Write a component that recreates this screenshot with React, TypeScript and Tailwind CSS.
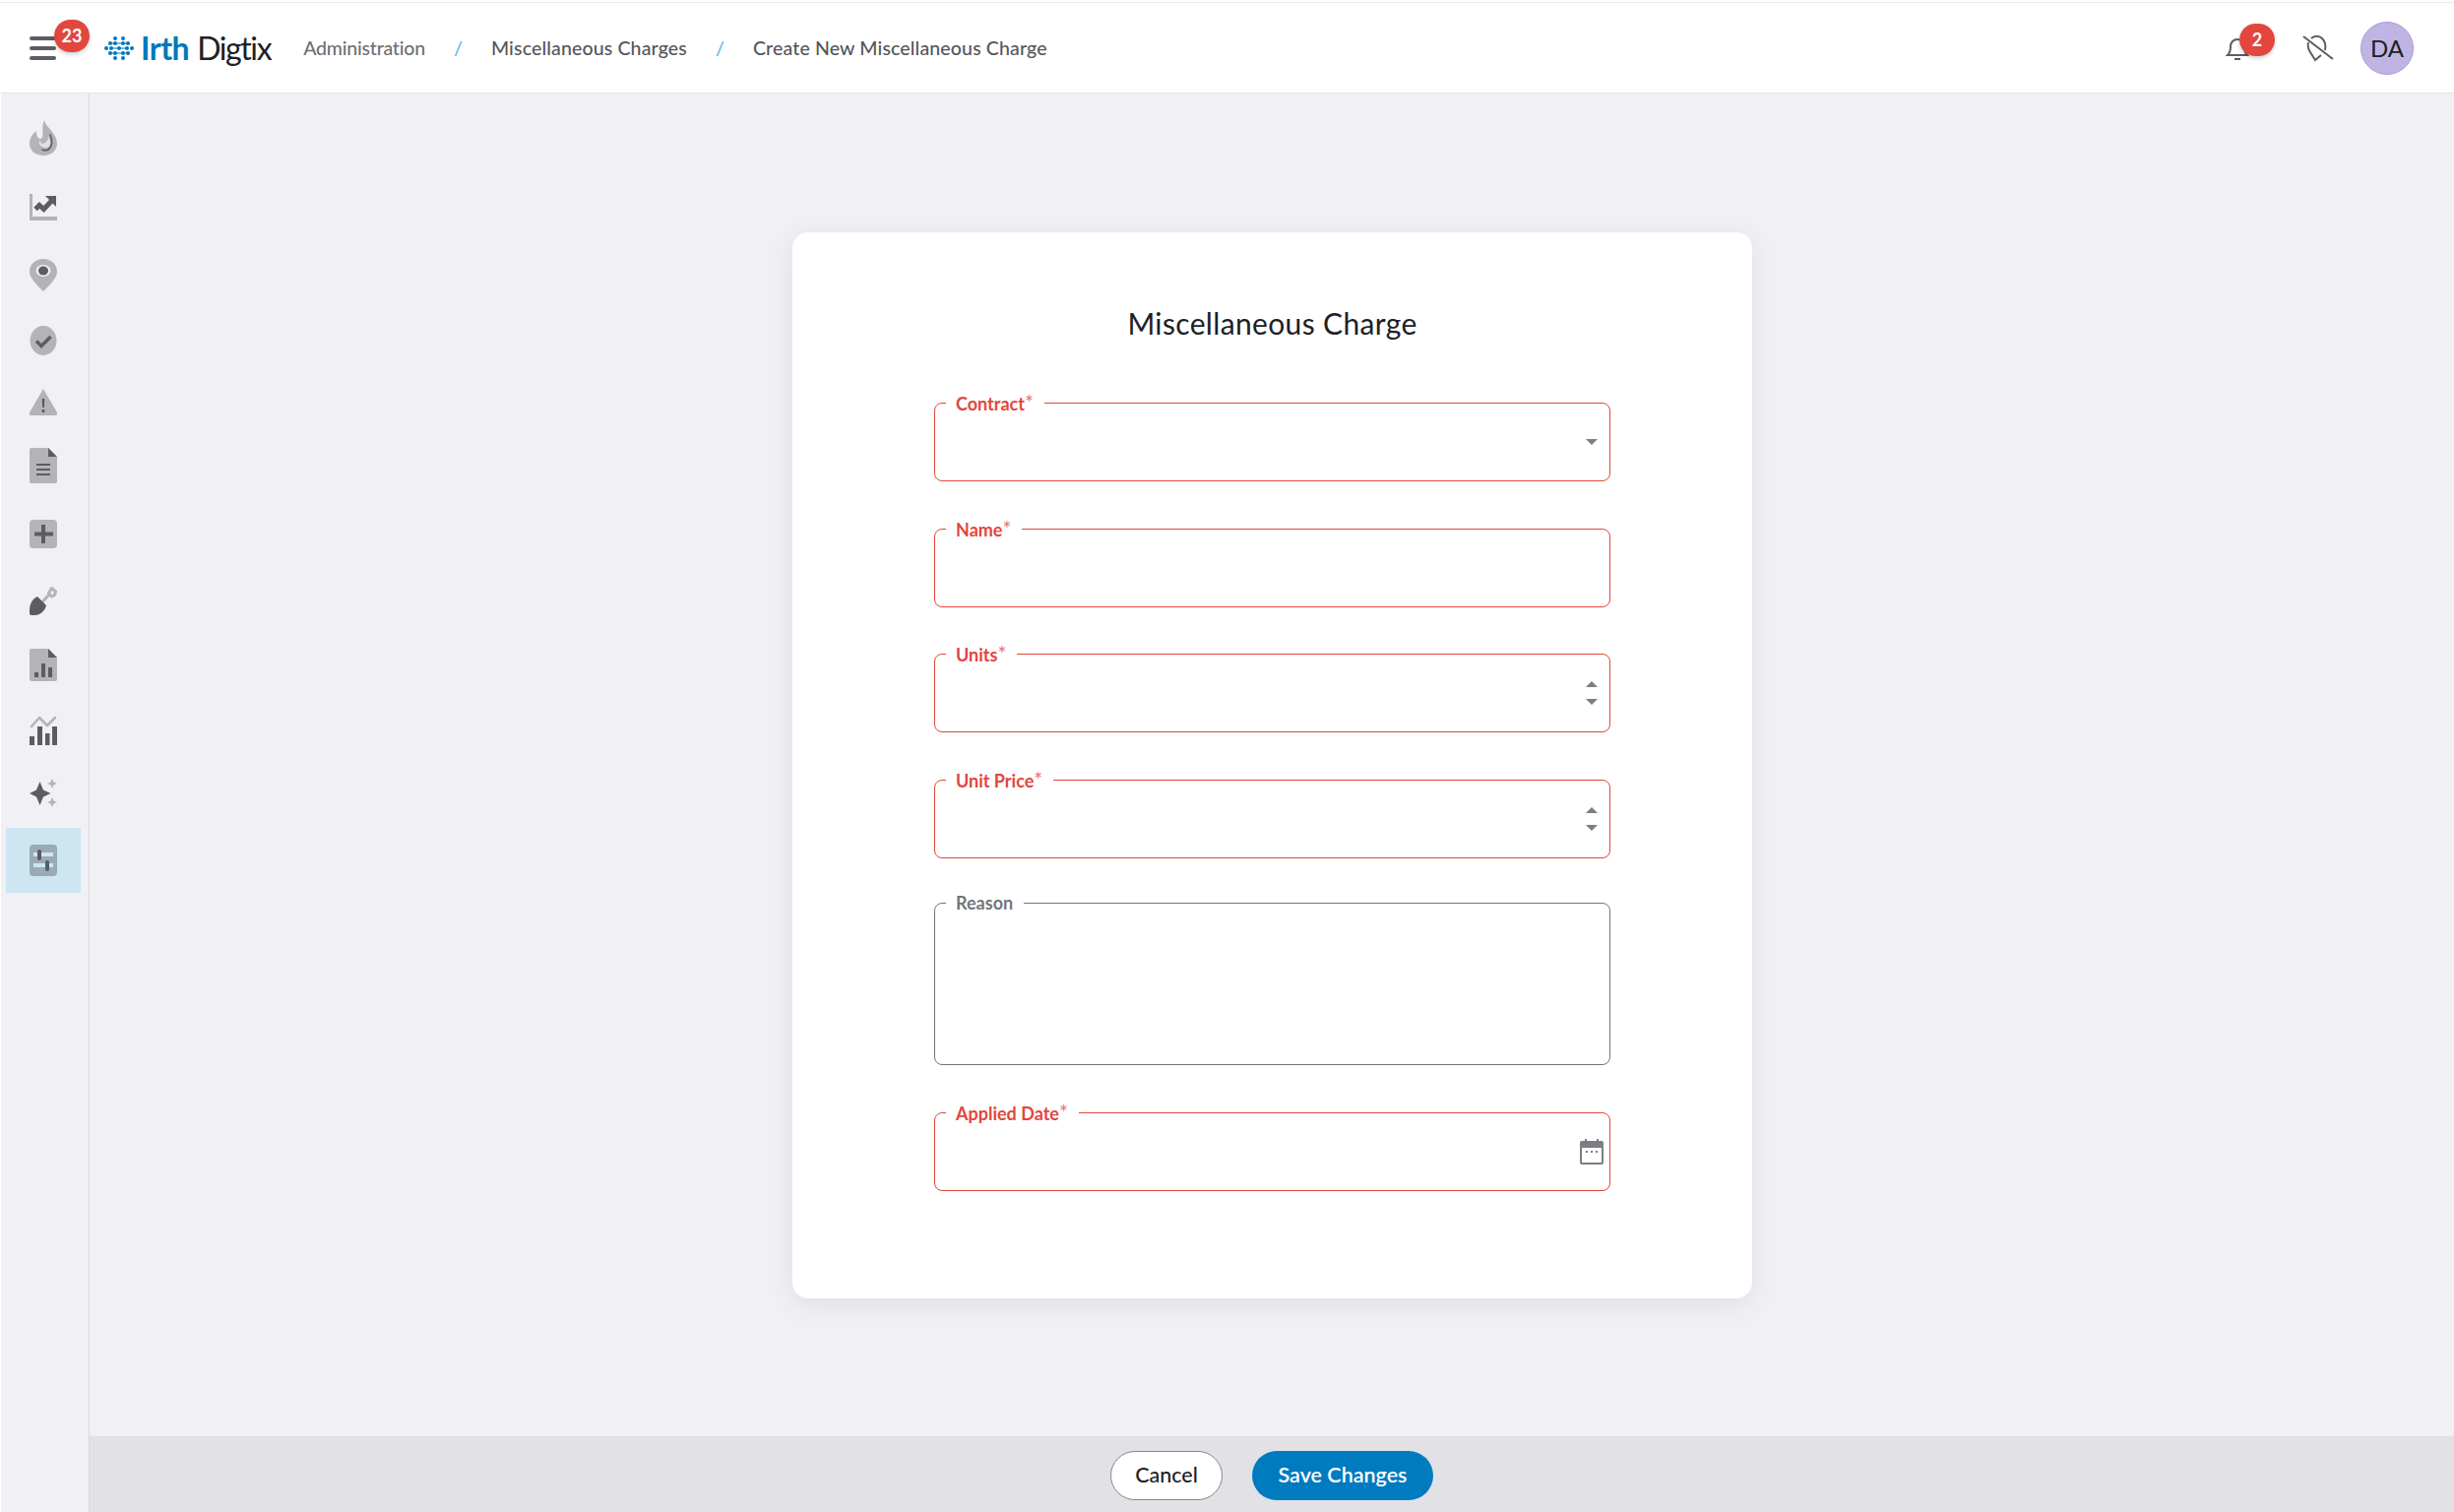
import type { ReactNode } from 'react'

const LIGHT = '#b4b4b7'
const DARK = '#5c5c63'

function Flame() {
	return (
		<svg width="28" height="36" viewBox="0 0 28 36">
			<path fill={LIGHT} d="M15 0c1 7 13 13 13 24 0 7-6 12-14 12S0 31 0 24c0-6 3-10 7-13 0 4 1 8 4 8 5-1 0-11 4-19z" />
			<path fill="#f0f0f5" d="M10 20c-1 4 1 8 6 8 3 0 5-2 5-5 0-2-1-4-2-6 0 4-3 7-6 7-1 0-2-2-3-4z" opacity="0.75" />
			<path fill="none" stroke={DARK} strokeWidth="1.6" strokeLinecap="round" d="M21 15c3 6 2 12-2 15-2 1-4 1-6 0" />
		</svg>
	)
}

function Trend() {
	return (
		<svg width="28" height="27" viewBox="0 0 28 27">
			<path fill={LIGHT} d="M0 0h3v23h25v4H1a1 1 0 0 1-1-1z" />
			<path fill="none" stroke={DARK} strokeWidth="5" d="M6 15.500l4-4 4.500 4 8-8.500" />
			<path fill={DARK} d="M16 2h11v11z" />
		</svg>
	)
}

function Pin() {
	return (
		<svg width="28" height="33" viewBox="0 0 28 33">
			<path fill={LIGHT} d="M14 0c8 0 14 5.500 14 13 0 7-9 15-14 20C9 28 0 20 0 13 0 5.500 6 0 14 0z" />
			<ellipse cx="14" cy="12" rx="7.500" ry="6" fill="#f0f0f5" />
			<ellipse cx="14" cy="12" rx="5" ry="4.500" fill={DARK} />
		</svg>
	)
}

function Check() {
	return (
		<svg width="28" height="30" viewBox="0 0 28 30">
			<ellipse cx="14" cy="15" rx="13.500" ry="15" fill={LIGHT} />
			<path fill="none" stroke={DARK} strokeWidth="3.500" d="M7 15.500l5 5 9.500-9.500" />
		</svg>
	)
}

function Warning() {
	return (
		<svg width="28" height="27" viewBox="0 0 28 27">
			<path fill={LIGHT} d="M14 0l14 24a2 2 0 0 1-2 3H2a2 2 0 0 1-2-3z" />
			<path fill={DARK} d="M12.700 10h2.600l-.4 9h-1.800zM12.700 21h2.600v3h-2.600z" />
		</svg>
	)
}

function DocLines() {
	return (
		<svg width="28" height="36" viewBox="0 0 28 36">
			<path fill={LIGHT} d="M2 0h17l9 9v25a2 2 0 0 1-2 2H2a2 2 0 0 1-2-2V2a2 2 0 0 1 2-2z" />
			<path fill={DARK} d="M19 0l9 9h-9zM7 16h14v2H7zM7 21h14v2H7zM7 26h14v2H7z" />
		</svg>
	)
}

function PlusBox() {
	return (
		<svg width="28" height="29" viewBox="0 0 28 29">
			<rect width="28" height="29" rx="4" fill={LIGHT} />
			<path fill={DARK} d="M12 5h4v7.500h8v4h-8V24h-4v-7.500H5v-4h7z" />
		</svg>
	)
}

function Shovel() {
	return (
		<svg width="28" height="30" viewBox="0 0 28 30">
			<path fill="none" stroke={LIGHT} strokeWidth="3" d="M10 20L20 9" />
			<path fill="none" stroke={LIGHT} strokeWidth="3" strokeLinejoin="round" d="M19.500 7.500l3-5 4 3.500-1 3.500-3 1.500z" />
			<path fill={DARK} d="M8 11l9 9c-1 5-6 10-12 10H2a2 2 0 0 1-2-2v-3c0-6 3-12 8-14z" />
		</svg>
	)
}

function DocBars() {
	return (
		<svg width="28" height="33" viewBox="0 0 28 33">
			<path fill={LIGHT} d="M2 0h17l9 9v22a2 2 0 0 1-2 2H2a2 2 0 0 1-2-2V2a2 2 0 0 1 2-2z" />
			<path fill={DARK} d="M19 0l9 9h-9zM5 24h4v5H5zM12 15h4v14h-4zM19 19h4v10h-4z" />
		</svg>
	)
}

function BarsLine() {
	return (
		<svg width="28" height="30" viewBox="0 0 28 30">
			<path fill={DARK} d="M0 21h5v9H0zM8 11h5v19H8zM16 18h4.500v12H16zM23 11h5v19h-5z" />
			<path fill="none" stroke={LIGHT} strokeWidth="2.500" strokeLinecap="round" strokeLinejoin="round" d="M2 11l8-9 8 8 8-8" />
		</svg>
	)
}

function Sparkle() {
	return (
		<svg width="28" height="30" viewBox="0 0 28 30">
			<path fill={DARK} d="M10.500 3l3.500 8.500 7.500 3.500-7.500 3.500-3.500 8.500-3.500-8.500L0 15l7-3.500z" />
			<path fill={LIGHT} d="M23 0l1.500 3.500L28 5l-3.500 1.500L23 10l-1.500-3.500L18 5l3.500-1.500zM23 19l1.500 3.500L28 24l-3.500 1.500L23 29l-1.500-3.500L18 24l3.500-1.500z" />
		</svg>
	)
}

function Sliders() {
	return (
		<svg width="28" height="32" viewBox="0 0 28 32">
			<rect width="28" height="32" rx="4" fill="#9aabb5" />
			<path fill="#cde6f2" d="M4 8h20v4H4zM4 19h20v4H4z" />
			<rect x="8" y="5" width="4" height="11" rx="2" fill={DARK} />
			<rect x="16" y="16" width="4" height="11" rx="2" fill={DARK} />
		</svg>
	)
}

const navItems: { icon: ReactNode; row: string }[] = [
	{ icon: <Flame />, row: 'h-[70px]' },
	{ icon: <Trend />, row: 'h-[71px]' },
	{ icon: <Pin />, row: 'h-[67px]' },
	{ icon: <Check />, row: 'h-[65px]' },
	{ icon: <Warning />, row: 'h-[60px]' },
	{ icon: <DocLines />, row: 'h-[70px]' },
	{ icon: <PlusBox />, row: 'h-[69px]' },
	{ icon: <Shovel />, row: 'h-[66px]' },
	{ icon: <DocBars />, row: 'h-[65px]' },
	{ icon: <BarsLine />, row: 'h-[68px]' },
	{ icon: <Sparkle />, row: 'h-[59px] mb-[6px]' },
	{ icon: <Sliders />, row: 'h-[66px] bg-[#cde6f2]' },
]

function Logo() {
	const dots = [
		[11, 2], [19, 2],
		[6, 7], [11, 7], [19, 7], [24, 7],
		[2, 12], [7, 12], [15, 12], [23, 12], [28, 12],
		[6, 17], [11, 17], [19, 17], [24, 17],
		[11, 22], [19, 22],
	]
	return (
		<svg width="30" height="24" viewBox="0 0 30 24" className="mr-[7px]">
			<path fill="none" stroke="#0078bd" strokeWidth="1.200" d="M6 7h18M7 12h16M6 17h18" />
			{dots.map(([x, y]) => (
				<circle key={`${x}-${y}`} cx={x} cy={y} r="2" fill="#0078bd" />
			))}
		</svg>
	)
}

function Sep() {
	return <span className="text-[#62b5e5]">/</span>
}

function Header() {
	return (
		<header className="flex h-[95px] shrink-0 flex-col border-b border-[#e4e4e9] bg-white">
			<div className="mt-[2px] h-px bg-[#f3e3f6]" />
			<div className="flex flex-1 items-center pl-[30px] pr-[41px]">
				<div className="relative mr-[49px] flex h-[24px] w-[27px] flex-col justify-between">
					<span className="h-[4px] rounded-sm bg-[#5c5c63]" />
					<span className="h-[4px] rounded-sm bg-[#5c5c63]" />
					<span className="h-[4px] rounded-sm bg-[#5c5c63]" />
					<span className="absolute -top-[17px] left-[25px] flex h-[33px] w-[36px] items-center justify-center rounded-full bg-[#e2463d] text-[18px] font-bold text-white shadow-[0_2px_4px_rgba(0,0,0,0.2)]">
						23
					</span>
				</div>
				<Logo />
				<span className="text-[32px] font-bold leading-none tracking-[-0.5px] text-[#0078bd]">Irth</span>
				<span className="ml-[8px] text-[32px] font-normal leading-none tracking-[-1.4px] text-[#1d2126]">Digtix</span>
				<nav className="ml-[33px] flex items-center gap-[29px] text-[19.5px] font-medium tracking-[0.15px] text-[#55555c]">
					<span className="tracking-[-0.2px] text-[#6d6f76]">Administration</span>
					<Sep />
					<span>Miscellaneous Charges</span>
					<Sep />
					<span>Create New Miscellaneous Charge</span>
				</nav>
				<div className="ml-auto flex items-center">
					<div className="relative mr-[54px]">
						<svg width="24" height="26" viewBox="0 0 24 26" fill="none" stroke="#5c5c63" strokeWidth="2">
							<path d="M2 20c2-2 3-4 3-9 0-4 3-7 7-7s7 3 7 7c0 5 1 7 3 9z" />
							<path d="M9 24h6" />
						</svg>
						<span className="absolute -top-[12px] left-[14px] flex h-[33px] w-[36px] items-center justify-center rounded-full bg-[#e2463d] text-[18px] font-bold text-white shadow-[0_2px_4px_rgba(0,0,0,0.2)]">
							2
						</span>
					</div>
					<svg width="32" height="28" viewBox="0 0 32 28" fill="none" stroke="#5c5c63" strokeWidth="2" className="mr-[27px]">
						<path d="M1 2l30 23" />
						<path d="M9 4c3-3 8-3 11 0 3 3 4 7 3 12M6 8c-1 4 0 7 2 10l5 8 6-5" />
					</svg>
					<div className="flex h-[54px] w-[54px] items-center justify-center rounded-full border border-[#a99bd9] bg-[#c0b4e3] text-[24px] text-[#1d2126]">
						DA
					</div>
				</div>
			</div>
		</header>
	)
}

function Field({
	label,
	required = true,
	height = 'h-[90px]',
	children,
}: {
	label: string
	required?: boolean
	height?: string
	children?: ReactNode
}) {
	const border = required ? 'border-[#e2463d]' : 'border-[#75757a]'
	const color = required ? 'text-[#e2463d]' : 'text-[#75757a]'
	return (
		<div className="relative">
			<fieldset className={`${height} rounded-[8px] border ${border}`}>
				<legend className={`ml-[11px] pl-[10px] pr-[11px] text-[18px] font-bold leading-[20px] ${color}`}>
					{label}
					{required && <span className="text-[21px] font-normal leading-[20px] text-[#ec6f78]">*</span>}
				</legend>
			</fieldset>
			{children}
		</div>
	)
}

function Caret({ up = false, className }: { up?: boolean; className: string }) {
	return (
		<svg width="12" height="6" viewBox="0 0 12 6" className={`absolute right-[13px] ${className}`}>
			<path fill="#7d7d82" d={up ? 'M6 0l6 6H0z' : 'M0 0h12L6 6z'} />
		</svg>
	)
}

function Spinner() {
	return (
		<>
			<Caret up className="top-[38px]" />
			<Caret className="top-[56px]" />
		</>
	)
}

export default function App() {
	return (
		<div className="flex h-screen flex-col overflow-hidden bg-[#f0f0f5] font-['Lato',sans-serif]">
			<Header />
			<div className="flex min-h-0 flex-1">
				<aside className="w-[91px] shrink-0 border-l border-r border-l-white border-r-[#d6d6dd] pl-[5px] pt-[10px]">
					{navItems.map((item, i) => (
						<div key={i} className={`flex w-[76px] items-center justify-center ${item.row}`}>
							{item.icon}
						</div>
					))}
				</aside>
				<div className="flex min-w-0 flex-1 flex-col">
					<main className="flex flex-1 justify-center pl-[1px] pt-[141px]">
						<section className="h-[1083px] w-[975px] rounded-[16px] bg-white pt-[75px] shadow-[0_6px_30px_rgba(0,0,0,0.08)]">
							<h1 className="text-center text-[30px] font-normal leading-[34px] tracking-[0.35px] text-[#1d2126]">Miscellaneous Charge</h1>
							<form className="mx-auto mt-[54px] flex w-[687px] flex-col">
								<Field label="Contract">
									<Caret className="top-[47px]" />
								</Field>
								<div className="mt-[38px]">
									<Field label="Name" />
								</div>
								<div className="mt-[37px]">
									<Field label="Units">
										<Spinner />
									</Field>
								</div>
								<div className="mt-[38px]">
									<Field label="Unit Price">
										<Spinner />
									</Field>
								</div>
								<div className="mt-[35px]">
									<Field label="Reason" required={false} height="h-[175px]" />
								</div>
								<div className="mt-[38px]">
									<Field label="Applied Date">
										<svg width="24" height="26" viewBox="0 0 24 26" className="absolute right-[7px] top-[37px]">
											<path fill="#7d7d82" fillRule="evenodd" d="M5 0h2v2h10V0h2v2h3a2 2 0 0 1 2 2v20a2 2 0 0 1-2 2H2a2 2 0 0 1-2-2V4a2 2 0 0 1 2-2h3zM2 9v15h20V9z" />
											<path fill="#7d7d82" d="M6 12h2v2H6zM11 12h2v2h-2zM16 12h2v2h-2z" />
										</svg>
									</Field>
								</div>
							</form>
						</section>
					</main>
					<footer className="flex h-[77px] shrink-0 items-center justify-center gap-[30px] bg-[#e1e1e6] pt-[2px]">
						<button type="button" className="h-[50px] w-[114px] rounded-full border border-[#85858a] bg-white text-[21.5px] font-medium text-[#1d2126]">
							Cancel
						</button>
						<button type="button" className="h-[50px] w-[184px] rounded-full bg-[#007bc0] text-[21.5px] font-semibold text-white">
							Save Changes
						</button>
					</footer>
				</div>
			</div>
		</div>
	)
}
